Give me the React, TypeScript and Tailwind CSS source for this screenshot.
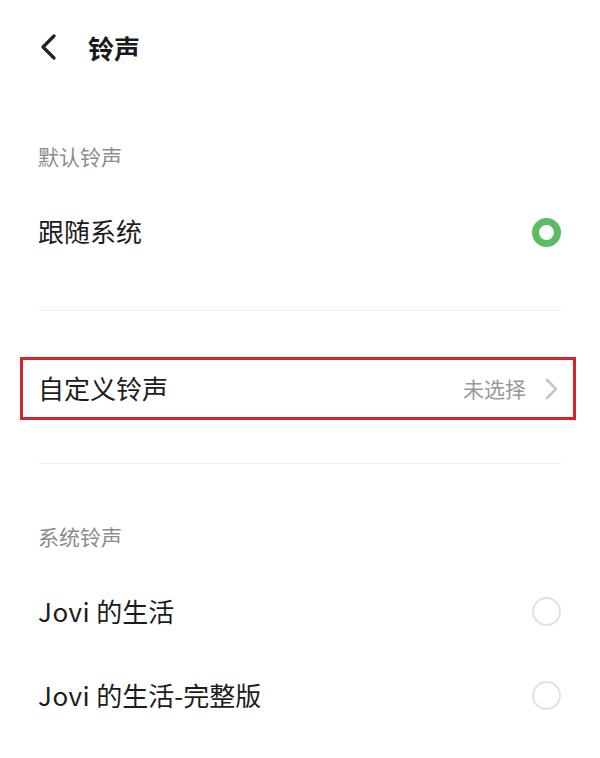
const font = { fontFamily: '"Noto Sans CJK SC", "Noto Sans", sans-serif' };

function Radio({ checked }: { checked?: boolean }) {
  return checked ? (
    <div className="w-[29px] h-[29px] rounded-full border-[7px] border-[#5bbd63]" />
  ) : (
    <div className="w-[29px] h-[29px] rounded-full border-[2.5px] border-[#e2e2e2]" />
  );
}

function Label({ text }: { text: string }) {
  return (
    <div className="h-[54px] flex items-center text-[21px] text-[#8c8c8c]">{text}</div>
  );
}

function Row({ rest }: { rest: string }) {
  return (
    <div className="h-[84px] flex items-center justify-between">
      <span className="mb-[2px] text-[26px] text-[#1c1c1c]">
        <span className="mr-[6px] tracking-[0.5px]">Jovi</span>
        {rest}
      </span>
      <div className="mr-[1px]">
        <Radio />
      </div>
    </div>
  );
}

export default function App() {
  return (
    <div className="w-[600px] h-[758px] bg-white overflow-hidden" style={font}>
      {/* header */}
      <div className="h-[94px] flex items-center pl-[38px]">
        <svg width="20" height="26" viewBox="0 0 20 26" className="ml-[1px]">
          <path d="M15 2 L4 13 L15 24" fill="none" stroke="#222" strokeWidth="3.2" strokeLinecap="round" strokeLinejoin="round" />
        </svg>
        <span className="ml-[29px] text-[26px] font-bold text-[#1a1a1a]">铃声</span>
      </div>

      <div className="px-[38px]">
        <div className="mt-[36px]">
          <Label text="默认铃声" />
        </div>
        <div className="h-[96px] flex items-center justify-between">
          <span className="mb-[3px] text-[26px] text-[#1c1c1c]">跟随系统</span>
          <div className="mr-[1px]">
            <Radio checked />
          </div>
        </div>
        <div className="mt-[30px] h-px bg-[#efefef]" />

        <div className="mt-[46px] -ml-[18px] -mr-[14px] h-[63px] border-[3px] border-[#d2262f] pl-[15px] pr-[11px] flex items-center justify-between">
          <span className="mb-[2px] text-[26px] text-[#1c1c1c]">自定义铃声</span>
          <div className="flex items-center">
            <span className="text-[21px] text-[#999999]">未选择</span>
            <svg width="16" height="22" viewBox="0 0 16 22" className="ml-[18px] mr-[2px]">
              <path d="M3 2 L12 11 L3 20" fill="none" stroke="#c6c6c6" strokeWidth="2.6" strokeLinecap="round" strokeLinejoin="round" />
            </svg>
          </div>
        </div>

        <div className="mt-[43px] h-px bg-[#efefef]" />
        <div className="mt-[46px]">
          <Label text="系统铃声" />
        </div>
        <div className="mt-[5px]">
          <Row rest="的生活" />
          <Row rest="的生活-完整版" />
        </div>
      </div>
    </div>
  );
}
